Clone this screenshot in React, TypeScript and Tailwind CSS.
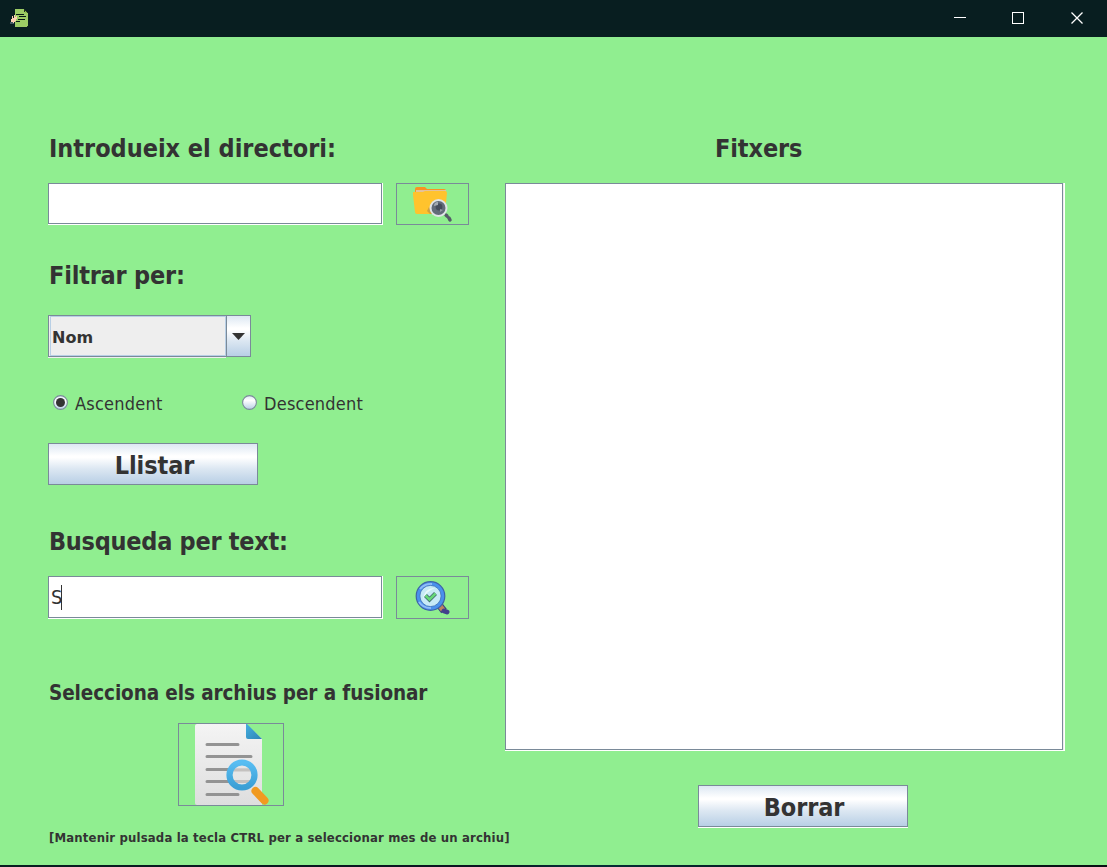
import React, { useState } from "react";

const metal =
  "border border-[#7a8a99] bg-[linear-gradient(to_bottom,#dde8f3_0%,#ffffff_30%,#ffffff_34%,#dce7f2_62%,#b8cfe5_100%)]";

function Heading({ children, className }: { children: React.ReactNode; className: string }) {
  return <h2 className={`h-8 whitespace-nowrap pt-px text-[25px] leading-8 font-bold ${className}`}>{children}</h2>;
}

function TextField({ value, className }: { value?: string; className: string }) {
  return (
    <div className={`w-[335px] border-r border-b border-white ${className}`}>
      <div className="flex h-full items-center border border-[#7a8a99] bg-white pl-[2px] text-[20px] leading-6 tracking-[-1px]">
        {value && (
          <>
            <span>{value}</span>
            <span className="h-[25px] w-px bg-[#333333]" />
          </>
        )}
      </div>
    </div>
  );
}

function Radio({ label, checked, onSelect, className }: { label: string; checked: boolean; onSelect: () => void; className: string }) {
  return (
    <button type="button" onClick={onSelect} className={`flex h-6 items-center whitespace-nowrap text-[18px] leading-6 tracking-[0.22px] ${className}`}>
      <svg className="mr-[7px] -mt-px shrink-0" width="15" height="15" viewBox="0 0 15 15">
        <defs>
          <linearGradient id="radioFill" x1="0" y1="0" x2="0" y2="1">
            <stop offset="0" stopColor="#dde8f3" />
            <stop offset=".35" stopColor="#fff" />
            <stop offset="1" stopColor="#b8cfe5" />
          </linearGradient>
        </defs>
        <circle cx="7.5" cy="7.5" r="6.9" fill="url(#radioFill)" stroke="#7a8a99" strokeWidth="1.1" />
        {checked && <circle cx="7.5" cy="7.5" r="4.5" fill="#333" />}
      </svg>
      <span className="pt-[2px]">{label}</span>
    </button>
  );
}

function AppIcon() {
  return (
    <svg width="19" height="19" viewBox="0 0 19 19" shapeRendering="crispEdges">
      <path d="M5 0h10v3h3v15H5z" fill="#9ccc65" />
      <path d="M14 0h1v3h-1zM15 1h1v1h-1zM16 2h1v1h-1zM17 3h1v1h-1zM17 17h1v1h-1z" fill="#1e3020" />
      <path d="M15 2h1v1h1v1h-2z" fill="#8bc34a" />
      <path d="M6 5h8v1H6zM9 7h7v1H9zM8 10h7v1H8zM6 12h4v1H6z" fill="#071a16" />
      <path d="M1 10h1V7h1v2h1V6h1v2h1V7h1v3H6v2H5v1H4v1H1z" fill="#ffd0b5" />
      <path d="M0 13h3v1h1v1H0z" fill="#455a64" />
    </svg>
  );
}

function FolderSearch() {
  return (
    <svg width="42" height="36" viewBox="0 0 42 36">
      <path d="M3 2q0-2 2-2h8l2 2h17q2 0 2 2v5H3z" fill="#fb9222" />
      <path d="M4 3h30v4H4z" fill="#e5c19a" />
      <path d="M1 5h10l2-1h20q2 0 2 2l-2 19q0 2-2 2H5q-2 0-2-2L1 8z" fill="#ffc32d" />
      <path d="M17 20l-2 4 3 3h4z" fill="#cfa13f" />
      <path d="M34 28l1 1M37 31l1 2" stroke="#555b68" strokeWidth="3.5" strokeLinecap="round" />
      <path d="M34 28l4 5" stroke="#555b68" strokeWidth="2" />
      <circle cx="26.5" cy="21" r="9" fill="#dfe3e7" />
      <circle cx="26.5" cy="21" r="7" fill="#626b79" />
      <circle cx="27" cy="20" r="3.4" fill="#444c5b" />
      <path d="M22 19q0-4 4-4v3z" fill="#a4aab2" />
      <path d="M28 22l3 1-3 2z" fill="#9299a4" />
    </svg>
  );
}

function CheckSearch() {
  return (
    <svg width="36" height="34" viewBox="0 0 36 34">
      <path d="M25 25l4 5" stroke="#39457f" strokeWidth="7" />
      <path d="M25 25l3 4" stroke="#bc835f" strokeWidth="5" />
      <path d="M29 30l3 1" stroke="#42408c" strokeWidth="5" strokeLinecap="round" />
      <circle cx="15.5" cy="15" r="14.3" fill="#4a91ed" stroke="#3e62a7" strokeWidth="1.2" />
      <path d="M5 8Q9 3 17 3M4 21q4 6 12 6" fill="none" stroke="#8fbcf7" strokeWidth="2" />
      <circle cx="15.5" cy="15" r="10.6" fill="#c7eaf6" stroke="#3e70b5" strokeWidth=".8" />
      <path d="M8 19Q9 7 20 7q-9 3-12 12z" fill="#e9f9fb" />
      <path d="M10.500 14.500l4 4 6-6" fill="none" stroke="#416a72" strokeWidth="4.200" />
      <path d="M10.500 14.500l4 4 6-6" fill="none" stroke="#65d778" strokeWidth="2.600" />
    </svg>
  );
}

function DocumentSearch() {
  return (
    <svg width="76" height="81" viewBox="0 0 76 81">
      <defs>
        <linearGradient id="paper" x1="0" y1="0" x2="0" y2="1">
          <stop offset="0" stopColor="#f4f4f4" />
          <stop offset="1" stopColor="#dedede" />
        </linearGradient>
        <linearGradient id="ring" x1="0" y1="0" x2="0" y2="1">
          <stop offset="0" stopColor="#58bdf2" />
          <stop offset="1" stopColor="#3b9fd5" />
        </linearGradient>
        <linearGradient id="fold" x1="0" y1="0" x2="1" y2="1">
          <stop offset="0" stopColor="#45afe0" />
          <stop offset="1" stopColor="#2e84b5" />
        </linearGradient>
      </defs>
      <path d="M2 0h49l16 15v66H2q-2 0-2-2V2q0-2 2-2z" fill="url(#paper)" />
      <path d="M51 0h1l15 15H53q-2 0-2-2z" fill="url(#fold)" />
      <path d="M12 20.500h31M12 32.500h44M12 45.500h44M12 57.500h44M12 70.500h31" fill="none" stroke="#939393" strokeWidth="3" strokeLinecap="round" />
      <circle cx="47" cy="51" r="12.500" fill="#e5e5e5" fillOpacity=".85" />
      <path d="M38 46h18M38 57.500h18" stroke="#c4c1bf" strokeWidth="3" />
      <circle cx="47" cy="51" r="12.500" fill="none" stroke="url(#ring)" strokeWidth="6.200" />
      <path d="M60.500 67l9 9.500" stroke="#f19a20" strokeWidth="8" strokeLinecap="round" />
    </svg>
  );
}

export default function App() {
  const [order, setOrder] = useState("asc");
  return (
    <div className="flex h-[867px] w-[1107px] flex-col overflow-hidden bg-[#90ee90] font-['DejaVu_Sans_Condensed','DejaVu_Sans',sans-serif] text-[#333333] [font-stretch:condensed]">
      <header className="flex h-[37px] shrink-0 items-start justify-between bg-[#081e20] pt-[9px] pl-[10px]">
        <AppIcon />
        <div className="flex pr-[23px]">
          <svg width="130" height="16" viewBox="0 0 130 16" fill="none" stroke="#fff">
            <path d="M0 8.500h12M58.500 3.500h11v11h-11z" shapeRendering="crispEdges" />
            <path d="M117.500 3.500l11 11M128.500 3.500l-11 11" strokeWidth="1.300" />
          </svg>
        </div>
      </header>

      <main className="flex h-[828px] shrink-0 pl-12">
        <section className="flex w-[457px] shrink-0 flex-col pt-[95px]">
          <Heading className="pl-px tracking-[-0.02px]">Introdueix el directori:</Heading>
          <div className="mt-[19px] flex h-[42px] gap-[13px]">
            <TextField className="h-[42px]" />
            <button type="button" aria-label="Directori" className="flex h-[42px] w-[73px] items-start border border-[#7a8a99] pt-[3px] pl-[15px]">
              <FolderSearch />
            </button>
          </div>

          <Heading className="mt-[34px] pl-px tracking-[-0.2px]">Filtrar per:</Heading>
          <button type="button" className="mt-6 flex h-[43px] w-[203px] text-left">
            <span className="flex h-[43px] flex-1 border-b border-[#eeeeee]">
              <span className="flex flex-1 border-y border-l border-[#7a8a99] bg-[#eeeeee] pl-px">
                <span className="flex flex-1 items-center border border-[#b8cfe5] pl-px pt-[3px] font-['DejaVu_Sans',sans-serif] text-[16px] leading-5 font-bold [font-stretch:normal]">Nom</span>
              </span>
            </span>
            <span className={`flex h-[42px] w-[25px] items-center justify-center ${metal}`}>
              <svg width="13" height="7" viewBox="0 0 13 7" className="mt-px"><path d="M0 0h13L6.500 7z" fill="#333" /></svg>
            </span>
          </button>

          <div className="mt-[33px] flex h-6">
            <Radio label="Ascendent" checked={order === "asc"} onSelect={() => setOrder("asc")} className="w-[189px] pl-[5px]" />
            <Radio label="Descendent" checked={order === "desc"} onSelect={() => setOrder("desc")} className="pl-[5px]" />
          </div>

          <button type="button" className={`mt-7 h-[42px] w-[210px] pt-[3px] pl-[3px] text-[25px] leading-8 font-bold tracking-[-0.1px] ${metal}`}>Llistar</button>

          <Heading className="mt-10 pl-px tracking-[-0.27px]">Busqueda per text:</Heading>
          <div className="mt-[19px] flex h-[43px] gap-[13px]">
            <TextField value="S" className="h-[43px]" />
            <button type="button" aria-label="Cerca" className="flex h-[43px] w-[73px] items-start border border-[#7a8a99] pt-1 pl-[18px]">
              <CheckSearch />
            </button>
          </div>

          <h3 className="mt-[60px] h-7 whitespace-nowrap pl-px text-[20.5px] leading-7 font-bold tracking-[-0.1px]">Selecciona els archius per a fusionar</h3>
          <button type="button" aria-label="Fusionar" className="mt-4 ml-[130px] flex h-[83px] w-[106px] shrink-0 border border-[#7a8a99] pl-4">
            <DocumentSearch />
          </button>
          <p className="mt-[22px] h-5 whitespace-nowrap pl-px text-[13px] leading-5 font-bold tracking-[0.16px]">[Mantenir pulsada la tecla CTRL per a seleccionar mes de un archiu]</p>
        </section>

        <section className="flex w-[560px] flex-col pt-[95px]">
          <Heading className="pl-[210px] tracking-[-0.1px]">Fitxers</Heading>
          <div className="mt-[19px] h-[568px] w-[560px] border-r border-b border-white">
            <div className="h-full w-full border-r border-[#eeeeee]">
              <div className="h-full w-full border border-[#7a8a99] bg-white" />
            </div>
          </div>
          <div className="mt-[34px] ml-[193px] h-[43px] w-[210px] border-b border-white">
            <button type="button" className={`h-[42px] w-[210px] pt-[4px] pl-[2px] text-[25px] leading-8 font-bold tracking-[-0.1px] ${metal}`}>Borrar</button>
          </div>
        </section>
      </main>
      <footer className="h-[2px] bg-[linear-gradient(to_right,#081e20_0%,#0a1420_45%,#063038_52%,#041c22_70%,#081012_100%)]" />
    </div>
  );
}
